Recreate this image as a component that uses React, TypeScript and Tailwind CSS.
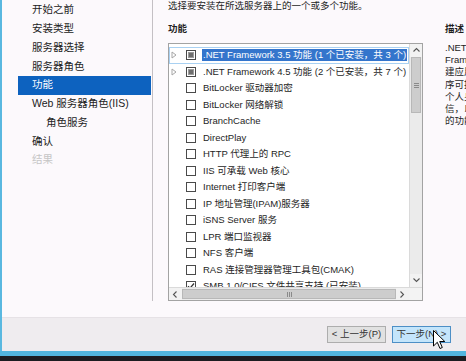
/**
 * 添加角色和功能向导 - "功能" 页
 * 左侧步骤导航，中间功能列表，右侧描述，底部按钮
 */

type Step = { label: string; active?: boolean; sub?: boolean; disabled?: boolean };
type Feature = { name: string; expand?: boolean; state?: 'none' | 'partial' | 'checked'; selected?: boolean };

const steps: Step[] = [
  { label: '开始之前' },
  { label: '安装类型' },
  { label: '服务器选择' },
  { label: '服务器角色' },
  { label: '功能', active: true },
  { label: 'Web 服务器角色(IIS)' },
  { label: '角色服务', sub: true },
  { label: '确认' },
  { label: '结果', disabled: true },
];

const features: Feature[] = [
  { name: '.NET Framework 3.5 功能 (1 个已安装，共 3 个)', expand: true, state: 'partial', selected: true },
  { name: '.NET Framework 4.5 功能 (2 个已安装，共 7 个)', expand: true, state: 'partial' },
  { name: 'BitLocker 驱动器加密' },
  { name: 'BitLocker 网络解锁' },
  { name: 'BranchCache' },
  { name: 'DirectPlay' },
  { name: 'HTTP 代理上的 RPC' },
  { name: 'IIS 可承载 Web 核心' },
  { name: 'Internet 打印客户端' },
  { name: 'IP 地址管理(IPAM)服务器' },
  { name: 'iSNS Server 服务' },
  { name: 'LPR 端口监视器' },
  { name: 'NFS 客户端' },
  { name: 'RAS 连接管理器管理工具包(CMAK)' },
  { name: 'SMB 1.0/CIFS 文件共享支持 (已安装)', state: 'checked' },
];

// 描述文字（按原图换行）
const descLines = [
  '.NET Framework 3.5 结合了 .NET',
  'Framework 2.0 API 的功能和用于构',
  '建应用程序的新技术，这些应用程',
  '序可提供美观的用户界面，保护客户',
  '个人身份信息，实现顺畅而安全的通',
  '信，以及提供为一系列业务流程建模',
  '的功能。',
];

function Checkbox({ state = 'none' }: { state?: Feature['state'] }) {
  return (
    <span className="w-[10px] h-[10px] shrink-0 border border-[#4a4a4a] bg-white flex items-center justify-center">
      {state === 'partial' && <span className="w-[6px] h-[6px] bg-[#6e6e6e] border border-[#9a9a9a]" />}
      {state === 'checked' && (
        <svg width="8" height="8" viewBox="0 0 8 8">
          <path d="M1 4.2 L3 6.2 L7 1.5" fill="none" stroke="#333" strokeWidth="1.3" />
        </svg>
      )}
    </span>
  );
}

function Chevron({ dir }: { dir: 'up' | 'down' | 'left' | 'right' }) {
  const d = {
    up: 'M1.5 5.5 L4.5 2.5 L7.5 5.5',
    down: 'M1.5 2.5 L4.5 5.5 L7.5 2.5',
    left: 'M5.5 1.5 L2.5 4.5 L5.5 7.5',
    right: 'M2.5 1.5 L5.5 4.5 L2.5 7.5',
  }[dir];
  return (
    <svg width="9" height="9" viewBox="0 0 9 9">
      <path d={d} fill="none" stroke="#555" strokeWidth="1.1" />
    </svg>
  );
}

export default function App() {
  return (
    <div className="relative w-[466px] h-[361px] overflow-hidden bg-[#fcf9fc] text-[#1e1e1e] font-['Liberation_Sans','Noto_Sans_CJK_SC',sans-serif]">
      <div className="flex flex-col h-[351px] border-l-[2px] border-[#5ab8e0]">
        {/* 内容区 */}
        <div className="flex h-[317px]">
          {/* 左侧步骤 */}
          <nav className="w-[151px] h-[301px] shrink-0 border-r border-[#c4c0c4] pt-[0.6px]">
            {steps.map((s) => (
              <div
                key={s.label}
                className={
                  'h-[18.8px] ml-[16px] mr-[1px] flex items-center text-[10.5px] whitespace-nowrap ' +
                  (s.sub ? 'pl-[28px] ' : 'pl-[14px] ') +
                  (s.active ? 'bg-[#0d62bf] text-white' : s.disabled ? 'text-[#c6c6c6]' : 'text-[#222]')
                }
              >
                {s.label}
              </div>
            ))}
          </nav>

          {/* 主区域 */}
          <main className="flex-1 pl-[15px] text-[9.5px]">
            <div className="h-[13px] leading-[13px] -mt-[1px] whitespace-nowrap">
              选择要安装在所选服务器上的一个或多个功能。
            </div>

            <div className="flex mt-[10px]">
              {/* 功能列表 */}
              <div className="w-[255px] shrink-0">
                <div className="h-[13px] leading-[13px] font-semibold">功能</div>
                <div className="mt-[8px] h-[258px] border border-[#a3a3a3] bg-white flex flex-col">
                  <div className="flex h-[243px]">
                    <div className="flex-1 overflow-hidden pt-[3px]">
                      {features.map((f) => (
                        <div
                          key={f.name}
                          className={
                            'h-[16.5px] flex items-center whitespace-nowrap ' +
                            (f.selected ? 'border border-[#a9d1f2]' : 'border border-transparent')
                          }
                        >
                          <span className="w-[16px] shrink-0 flex pl-[1px]">
                            {f.expand && (
                              <svg width="6" height="8" viewBox="0 0 6 8">
                                <path d="M1 1 L5 4 L1 7 Z" fill="none" stroke="#a6a6a6" strokeWidth="1" />
                              </svg>
                            )}
                          </span>
                          <Checkbox state={f.state} />
                          <span
                            className={
                              'ml-[6px] px-[1px] leading-[12px] ' + (f.selected ? 'bg-[#3475cc] text-white' : '')
                            }
                          >
                            {f.name}
                          </span>
                        </div>
                      ))}
                    </div>

                    {/* 竖向滚动条 */}
                    <div className="w-[13px] shrink-0 bg-[#ebebeb] border-l border-[#dadada] flex flex-col">
                      <div className="h-[13px] flex items-center justify-center bg-[#f2f2f2]">
                        <Chevron dir="up" />
                      </div>
                      <div className="h-[56px] mx-[1px] bg-[#cdcdcd] border border-[#b8b8b8] flex flex-col items-center justify-center gap-[1px]">
                        <span className="w-[5px] h-px bg-[#8a8a8a]" />
                        <span className="w-[5px] h-px bg-[#8a8a8a]" />
                        <span className="w-[5px] h-px bg-[#8a8a8a]" />
                      </div>
                      <div className="flex-1" />
                      <div className="h-[13px] flex items-center justify-center bg-[#f2f2f2]">
                        <Chevron dir="down" />
                      </div>
                    </div>
                  </div>

                  {/* 横向滚动条 */}
                  <div className="flex h-[13px] border-t border-[#dadada]">
                    <div className="flex-1 flex bg-[#ebebeb]">
                      <div className="w-[13px] flex items-center justify-center bg-[#f2f2f2]">
                        <Chevron dir="left" />
                      </div>
                      <div className="flex-1 my-[1px] bg-[#cdcdcd] border border-[#b8b8b8] flex items-center justify-center gap-[1px]">
                        <span className="w-px h-[5px] bg-[#8a8a8a]" />
                        <span className="w-px h-[5px] bg-[#8a8a8a]" />
                        <span className="w-px h-[5px] bg-[#8a8a8a]" />
                      </div>
                      <div className="w-[13px] flex items-center justify-center bg-[#f2f2f2]">
                        <Chevron dir="right" />
                      </div>
                    </div>
                    <div className="w-[13px] bg-[#f3f3f3]" />
                  </div>
                </div>
              </div>

              {/* 描述 */}
              <div className="ml-[22px] whitespace-nowrap">
                <div className="h-[13px] leading-[13px] font-semibold">描述</div>
                <div className="mt-[7px] leading-[12.2px]">
                  {descLines.map((l) => (
                    <div key={l}>{l}</div>
                  ))}
                </div>
              </div>
            </div>
          </main>
        </div>

        {/* 底部按钮 */}
        <footer className="flex-1 bg-[#efecef] border-t border-[#e6e2e6] flex items-center justify-end gap-[6px] pr-[15px] text-[9.5px] text-[#333]">
          <button className="w-[59px] h-[17px] border border-[#adadad] bg-[#e1e1e1] flex items-center justify-center">
            &lt; 上一步(P)
          </button>
          <button className="w-[59px] h-[17px] border border-[#4d8fc6] bg-[#c4e5fb] flex items-center justify-center">
            下一步(N) &gt;
          </button>
        </footer>
      </div>

      <div className="h-[5px] bg-[#52b5de]" />
      <div className="h-[5px] bg-[#1c1c20]" />

      {/* 鼠标指针 */}
      <svg className="absolute left-[433px] top-[330px]" width="13" height="20" viewBox="0 0 13 20">
        <path d="M0.5 0.5 L0.5 16 L4.3 12.3 L7 18.5 L9.3 17.5 L6.7 11.5 L11.8 11.5 Z" fill="white" stroke="black" strokeWidth="1" />
      </svg>
    </div>
  );
}
